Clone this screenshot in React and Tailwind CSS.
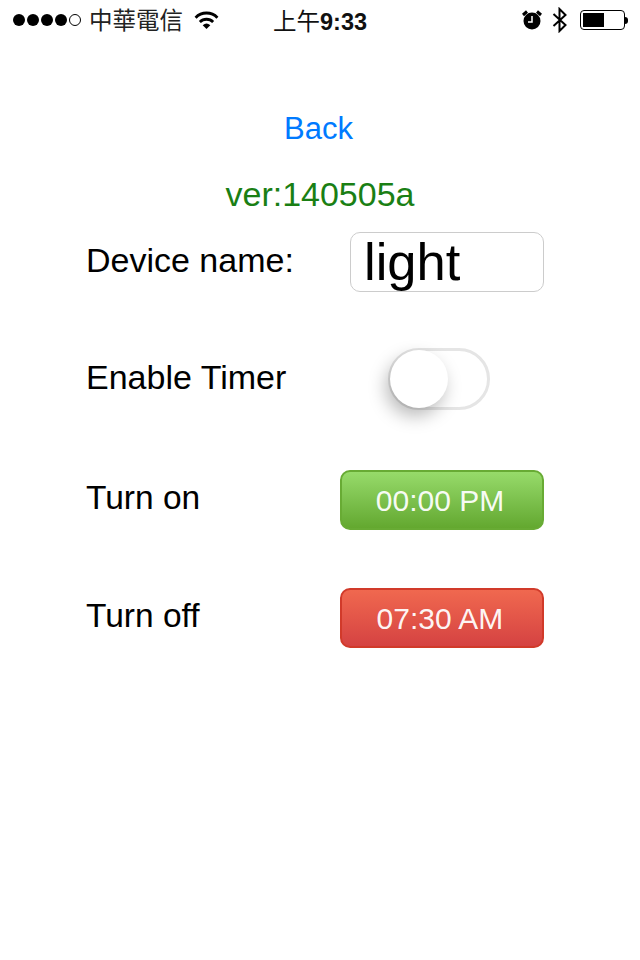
import React from 'react';

const font = { sans: 'font-["Liberation_Sans",sans-serif]' };

const StatusBar = () => (
    <div className="h-10 flex items-center text-black relative">
        <div className="flex items-center gap-[2px] ml-[13px]">
            <span className="w-[12px] h-[12px] rounded-full bg-black" />
            <span className="w-[12px] h-[12px] rounded-full bg-black" />
            <span className="w-[12px] h-[12px] rounded-full bg-black" />
            <span className="w-[12px] h-[12px] rounded-full bg-black" />
            <span className="w-[12px] h-[12px] rounded-full border border-black" />
        </div>
        <span className='ml-[8px] text-[23.5px] leading-none font-["Noto_Sans_CJK_TC",sans-serif] text-[#222]'>中華電信</span>
        <svg className="ml-[11px] mt-[1px]" width="25" height="19" viewBox="0 0 26 20">
            <path d="M1.5 7 A16 16 0 0 1 24.5 7" fill="none" stroke="#000" strokeWidth="3" />
            <path d="M6 11.5 A10 10 0 0 1 20 11.5" fill="none" stroke="#000" strokeWidth="3" />
            <path d="M9 15 L13 19 L17 15 A6 6 0 0 0 9 15 Z" fill="#000" />
        </svg>
        <span className='absolute left-[273px] top-[7px] text-[23.5px] leading-[26px] whitespace-nowrap font-["Noto_Sans_CJK_TC",sans-serif] text-[#111]'>
            上午<span className='font-["Liberation_Sans",sans-serif] font-bold text-[23.5px]'>9:33</span>
        </span>
        <div className="ml-auto flex items-center mr-[12px]">
            <svg width="22" height="22" viewBox="0 0 22 22">
                <circle cx="11" cy="12" r="8.5" fill="#000" />
                <path d="M2 6 L6 2.5 M20 6 L16 2.5" stroke="#000" strokeWidth="3" />
                <path d="M11 7 V13 H7" fill="none" stroke="#fff" strokeWidth="1.5" />
            </svg>
            <svg className="ml-[8px]" width="17" height="26" viewBox="0 0 16 26">
                <path d="M2 7 L14 18 L8 24 V2 L14 8 L2 19" fill="none" stroke="#000" strokeWidth="2" />
            </svg>
            <div className="ml-[12px] w-[45px] h-[20px] border border-black rounded-[4px] p-[2px]">
                <div className="w-[21px] h-full bg-black" />
            </div>
            <div className="w-[3px] h-[7px] bg-black rounded-r-sm" />
        </div>
    </div>
);

const Row = ({ label, className, labelClass = 'text-[34px]', children }) => (
    <div className={`flex items-center justify-between ${className}`}>
        <span className={`${labelClass} leading-none -mt-[4px] text-black`}>{label}</span>
        {children}
    </div>
);

const App = () => {
    return (
        <div className={`w-[640px] h-[960px] bg-white overflow-hidden ${font.sans}`}>
            <StatusBar />
            <div className="pt-[71px] text-center text-[31px] leading-[36px] text-[#007aff] pr-[3px]">Back</div>
            <div className="mt-[29px] text-center text-[34px] leading-[36px] text-[#1a7f14]">ver:140505a</div>
            <div className="pl-[86px] pr-[96px]">
                <Row label="Device name:" className="mt-[20px] h-[60px]">
                    <div className="w-[194px] h-[60px] border border-[#cccccc] rounded-[10px] pl-[13px] text-[52.5px] leading-[58px] text-black">light</div>
                </Row>
                <Row label="Enable Timer" className="mt-[56px] h-[62px]">
                    <div className="relative w-[102px] h-[62px] mr-[54px] rounded-full border-[3px] border-[#e5e5e5] bg-white">
                        <div className="absolute left-[-1px] top-[-1px] w-[58px] h-[58px] rounded-full bg-white shadow-[-4px_8px_18px_rgba(0,0,0,0.28)]" />
                    </div>
                </Row>
                <Row label="Turn on" labelClass="text-[33.5px]" className="mt-[60px] h-[60px]">
                    <div className="w-[204px] h-[60px] flex items-center justify-center pr-[4px] rounded-[10px] border-2 border-[#68ab34] bg-gradient-to-b from-[#97db6a] to-[#63a82f] text-white/95 text-[30px]">00:00 PM</div>
                </Row>
                <Row label="Turn off" labelClass="text-[33.5px]" className="mt-[58px] h-[60px]">
                    <div className="w-[204px] h-[60px] flex items-center justify-center pr-[4px] rounded-[10px] border-2 border-[#d13a2a] bg-gradient-to-b from-[#f0684f] to-[#d54242] text-white/95 text-[30px]">07:30 AM</div>
                </Row>
            </div>
        </div>
    );
};

export default App;
